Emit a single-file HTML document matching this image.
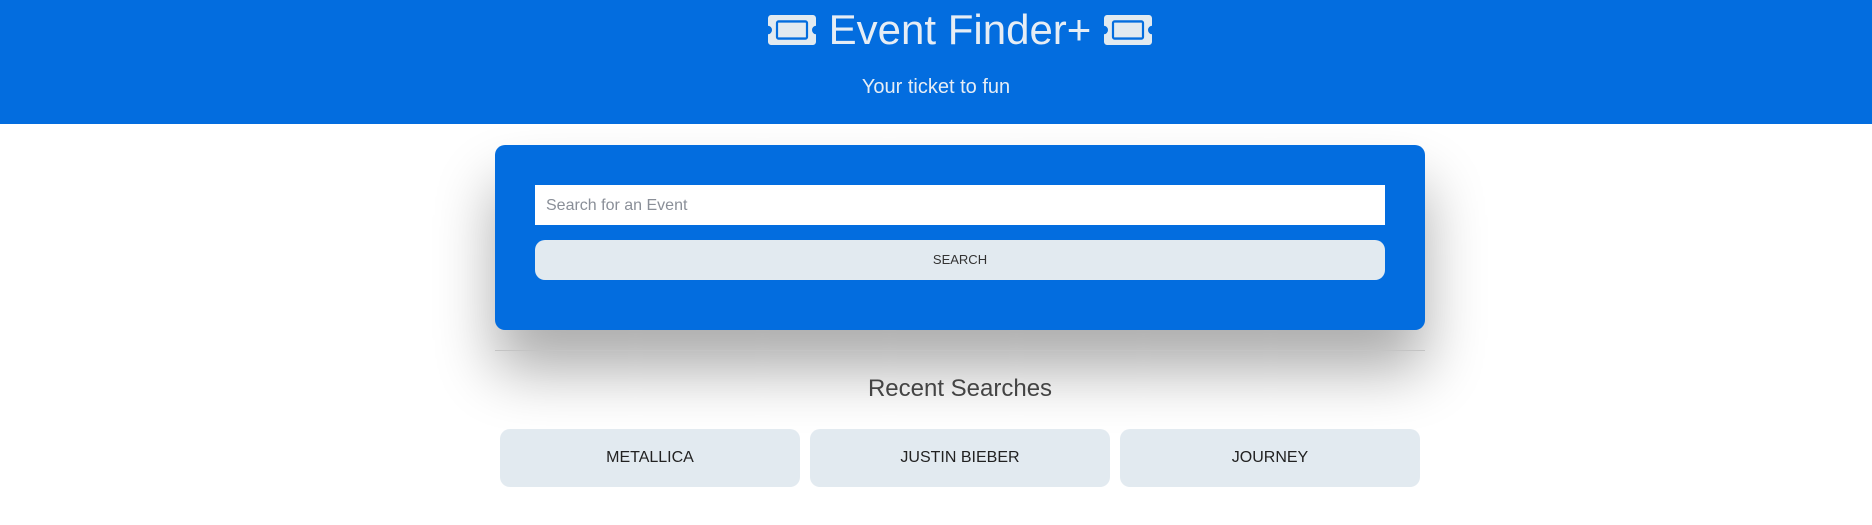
<!DOCTYPE html>
<html><head><meta charset="utf-8"><style>
*{box-sizing:border-box;margin:0;padding:0}
body{width:1872px;height:525px;background:#fff;font-family:"Liberation Sans",sans-serif;position:relative;overflow:hidden}
.hdr{position:absolute;left:0;top:0;width:1872px;height:124px;background:#036ddf;color:#e6edf5;text-align:center}
.title{position:absolute;left:48px;right:0;top:4px;font-size:42px;display:flex;justify-content:center;align-items:center;gap:12px;height:52px}
.sub{position:absolute;left:0;right:0;top:76px;font-size:20px}
.card{position:absolute;left:495px;top:145px;width:930px;height:185px;background:#036ddf;border-radius:10px;box-shadow:0 40px 60px rgba(0,0,0,0.33)}
.inp{position:absolute;left:40px;top:40px;width:850px;height:40px;background:#fff;color:#8a8f98;font-size:16px;padding:12px 11px}
.btn{position:absolute;left:40px;top:95px;width:850px;height:40px;background:#e2eaf0;border-radius:10px;color:#333;font-size:13px;text-align:center;line-height:40px}
.hr{position:absolute;left:495px;top:350px;width:930px;height:1px;background:#c4c4c4}
.rs{position:absolute;left:495px;width:930px;top:375px;text-align:center;font-size:24px;color:#444}
.rb{position:absolute;top:429px;width:300px;height:58px;background:#e2eaf0;border-radius:10px;text-align:center;line-height:58px;font-size:16px;color:#222}
</style></head><body>
<div class="hdr">
<div class="title">
<svg width="50" height="30" viewBox="0 0 50 28" preserveAspectRatio="none"><path d="M4 0H46a3 3 0 0 1 3 3V10a4 4 0 0 0 0 8V25a3 3 0 0 1-3 3H4a3 3 0 0 1-3-3V18a4 4 0 0 0 0-8V3a3 3 0 0 1 3-3Z" fill="#e2eaf0"/><rect x="10" y="6" width="30" height="16" rx="1.5" fill="none" stroke="#036ddf" stroke-width="2.2"/></svg>
<span>Event Finder+</span>
<svg width="50" height="30" viewBox="0 0 50 28" preserveAspectRatio="none"><path d="M4 0H46a3 3 0 0 1 3 3V10a4 4 0 0 0 0 8V25a3 3 0 0 1-3 3H4a3 3 0 0 1-3-3V18a4 4 0 0 0 0-8V3a3 3 0 0 1 3-3Z" fill="#e2eaf0"/><rect x="10" y="6" width="30" height="16" rx="1.5" fill="none" stroke="#036ddf" stroke-width="2.2"/></svg>
</div>
<div class="sub">Your ticket to fun</div>
</div>
<div class="card"><div class="inp">Search for an Event</div><div class="btn">SEARCH</div></div>
<div class="hr"></div>
<div class="rs">Recent Searches</div>
<div class="rb" style="left:500px">METALLICA</div>
<div class="rb" style="left:810px">JUSTIN BIEBER</div>
<div class="rb" style="left:1120px">JOURNEY</div>
</body></html>
